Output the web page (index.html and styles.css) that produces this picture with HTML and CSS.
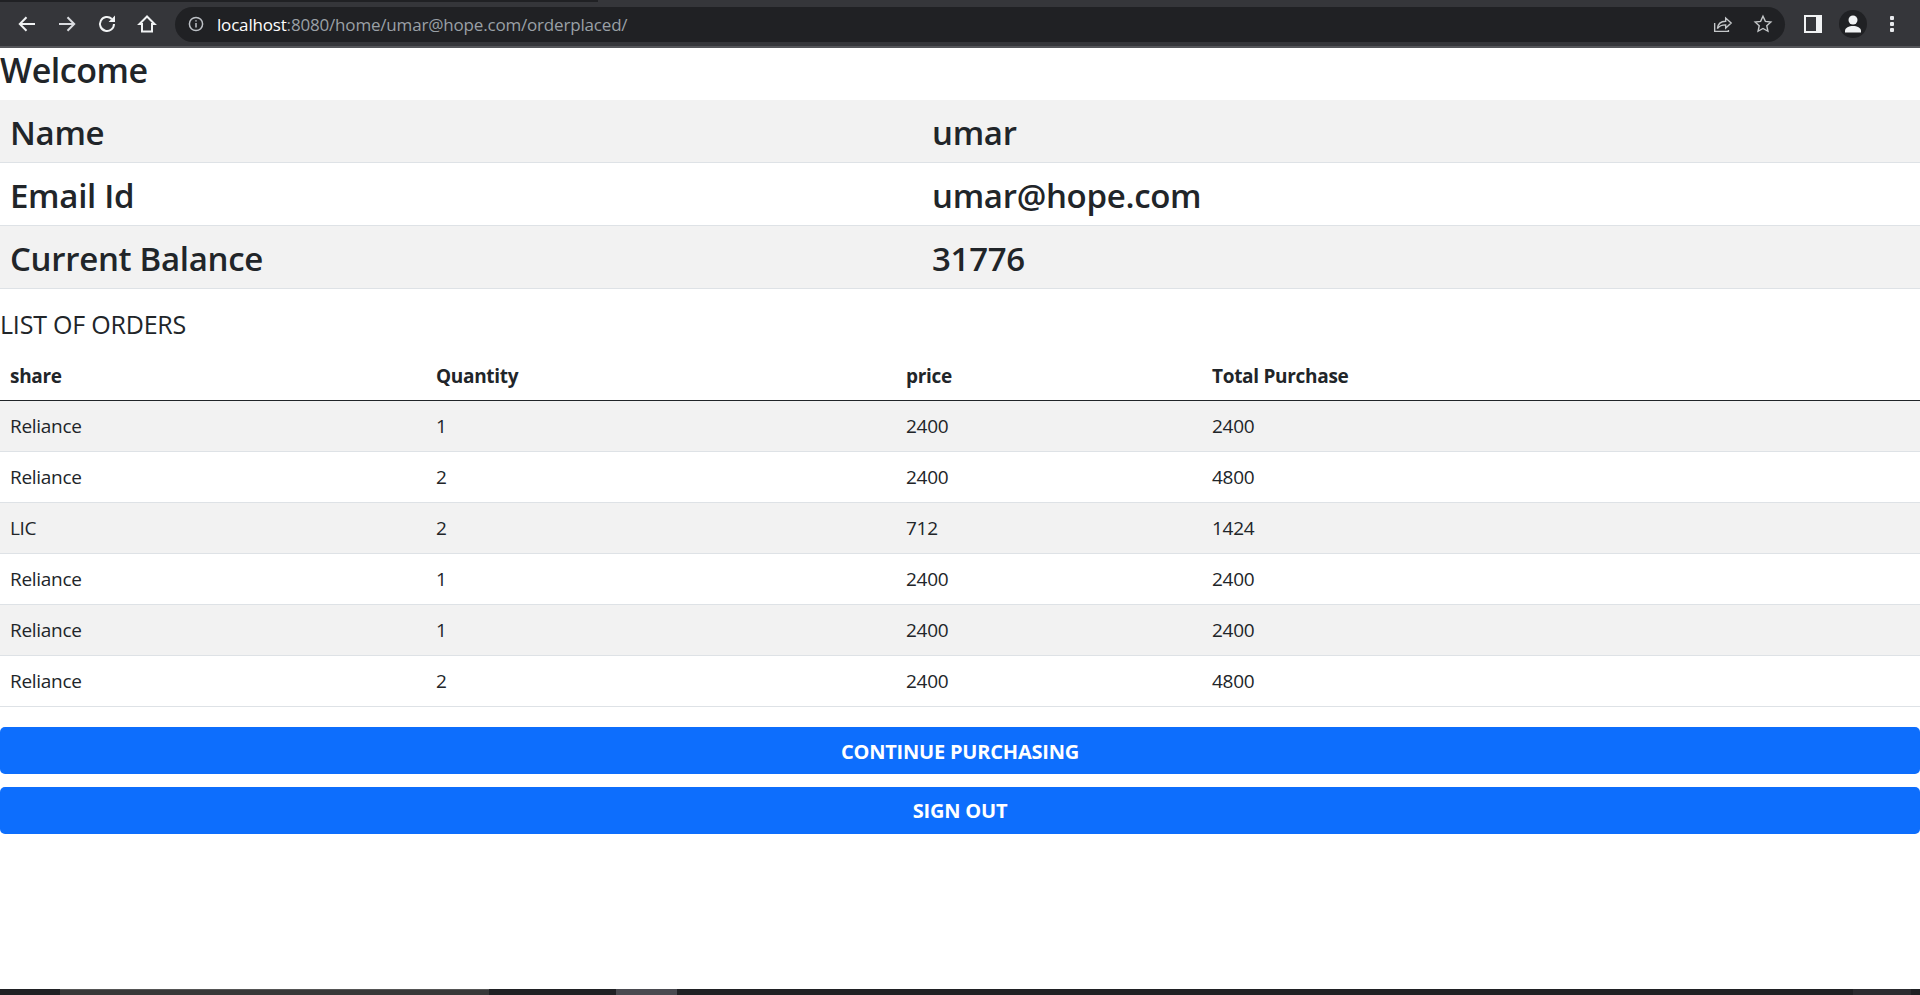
FILE: index.html
```html
<!DOCTYPE html>
<html>
	<head>
		<meta charset="UTF-8">
		<title>orderplaced</title>
		<link rel="stylesheet" href="styles.css">
	</head>
	<body>
		<div class="topstrip"><div class="topstrip-tab"></div></div>
		<div class="toolbar">
			<div class="nav">
				<svg class="icon" viewBox="0 0 24 24"><path d="M20 12H5M11.500 5.200 4.800 12l6.700 6.800"/></svg>
				<svg class="icon icon-dim" viewBox="0 0 24 24"><path d="M4 12h15M12.500 5.200l6.700 6.800-6.700 6.800"/></svg>
				<svg class="icon" viewBox="0 0 24 24"><path d="M19 12a7 7 0 1 1-2.200-5.100"/><path class="solid" d="M20 3.500v6.400h-6.400z"/></svg>
				<svg class="icon" viewBox="0 0 24 24"><path d="M12 4.500 4.500 12H7v7.500h10V12h2.500z"/></svg>
			</div>
			<div class="omnibox">
				<svg class="icon-info" viewBox="0 0 16 16"><circle cx="8" cy="8" r="6.600"/><path d="M8 7v4.600M8 4.200v1.400"/></svg>
				<span class="url"><span class="url-host">localhost</span>:8080/home/umar@hope.com/orderplaced/</span>
				<svg class="icon icon-share" viewBox="0 0 24 24"><path d="M4 11v9h15v-1.500"/><path d="M7 17c.5-5 4-8 9-8V5.500l6 5.500-6 5.500V13c-4 0-7 1-9 4z"/></svg>
				<svg class="icon icon-star" viewBox="0 0 24 24"><path d="M12 3.500l2.600 5.600 6 .7-4.500 4.100 1.300 6L12 16.900l-5.400 3 1.300-6-4.500-4.100 6-.7z"/></svg>
			</div>
			<div class="side-btn"><div class="side-pane"></div></div>
			<div class="avatar">
				<svg viewBox="0 0 28 28"><circle cx="14" cy="10" r="4.500"/><path d="M6 21c0-3.500 4-5 8-5s8 1.500 8 5v1.500H6z"/></svg>
			</div>
			<div class="dots"><i></i><i></i><i></i></div>
		</div>

		<div class="page">
			<h3 class="welcome">Welcome</h3>
			<table class="info">
				<colgroup><col class="info-label"><col></colgroup>
				<tr><td>Name</td><td>umar</td></tr>
				<tr><td>Email Id</td><td>umar@hope.com</td></tr>
				<tr><td>Current Balance</td><td>31776</td></tr>
			</table>

			<h5 class="list-title">LIST OF ORDERS</h5>
			<table class="orders">
				<colgroup><col class="c-share"><col class="c-qty"><col class="c-price"><col></colgroup>
				<thead>
					<tr><th>share</th><th>Quantity</th><th>price</th><th>Total Purchase</th></tr>
				</thead>
				<tbody>
					<tr><td>Reliance</td><td>1</td><td>2400</td><td>2400</td></tr>
					<tr><td>Reliance</td><td>2</td><td>2400</td><td>4800</td></tr>
					<tr><td>LIC</td><td>2</td><td>712</td><td>1424</td></tr>
					<tr><td>Reliance</td><td>1</td><td>2400</td><td>2400</td></tr>
					<tr><td>Reliance</td><td>1</td><td>2400</td><td>2400</td></tr>
					<tr><td>Reliance</td><td>2</td><td>2400</td><td>4800</td></tr>
				</tbody>
			</table>

			<a href="#" class="btn btn-first">CONTINUE PURCHASING</a>
			<a href="#" class="btn">SIGN OUT</a>
		</div>

		<div class="bottomstrip">
			<div class="strip-a"></div>
			<div class="strip-b"></div>
			<div class="strip-c"></div>
		</div>
	</body>
</html>
```

FILE: styles.css
```css
*{
	margin:0px;
	padding:0px;
	box-sizing:border-box;
}
html,body{
	height:100%;
	overflow:hidden;
}
body{
	display:flex;
	flex-direction:column;
	font-family:"Open Sans","Noto Sans",sans-serif;
	color:#212529;
	background:#fff;
}

/* browser bar */
.topstrip{
	height:2px;
	background:#35363a;
}
.topstrip-tab{
	width:598px;
	height:2px;
	background:#202124;
}
.toolbar{
	height:46px;
	background:#35363a;
	border-bottom:2px solid #55565a;
	display:flex;
	align-items:center;
	padding-left:12px;
}
.nav{
	display:flex;
	gap:10px;
	width:163px;
}
.icon{
	width:30px;
	height:30px;
	padding:3px;
	fill:none;
	stroke:#f1f3f4;
	stroke-width:2;
}
.icon-dim{
	stroke:#dadce0;
}
.icon .solid{
	fill:#f1f3f4;
	stroke:none;
}
.omnibox{
	width:1610px;
	height:35px;
	background:#202124;
	border-radius:18px;
	display:flex;
	align-items:center;
	padding-left:13px;
}
.icon-info{
	width:16px;
	height:16px;
	fill:none;
	stroke:#bdc1c6;
	stroke-width:1.500;
	flex:none;
}
.url{
	margin-left:13px;
	flex:1;
	font-size:17px;
	letter-spacing:-0.18px;
	color:#9aa0a6;
	white-space:nowrap;
}
.url-host{
	color:#fff;
}
.icon-share,.icon-star{
	width:28px;
	height:28px;
	stroke:#c4c7c9;
	stroke-width:1.500;
}
.icon-share{
	margin-right:13px;
}
.icon-star{
	margin-right:8px;
}
.side-btn{
	margin-left:19px;
	width:18px;
	height:18px;
	background:#f1f3f4;
	padding:2px;
}
.side-pane{
	width:10px;
	height:14px;
	background:#35363a;
}
.avatar{
	margin-left:17px;
	width:28px;
	height:28px;
	border-radius:50%;
	background:#202124;
}
.avatar svg{
	display:block;
	fill:#f1f3f4;
}
.dots{
	margin-left:23px;
	display:flex;
	flex-direction:column;
	gap:2px;
}
.dots i{
	display:block;
	width:4px;
	height:4px;
	background:#e8eaed;
	border-radius:1px;
}

/* page */
.page{
	flex:1;
}
.welcome{
	font-size:34px;
	font-weight:600;
	line-height:42px;
	padding-top:1px;
	height:52px;
	letter-spacing:-0.45px;
}
table{
	width:100%;
	border-collapse:separate;
	border-spacing:0px;
	table-layout:fixed;
}
td,th{
	text-align:left;
	border-bottom:1px solid #dee2e6;
}
.info-label{
	width:922px;
}
.info td{
	font-size:33px;
	font-weight:600;
	height:63px;
	padding:2px 10px 0px;
	letter-spacing:-0.3px;
}
.info tr:nth-child(odd) td{
	background:#f2f2f2;
}
.list-title{
	font-size:25px;
	font-weight:500;
	line-height:30px;
	margin-top:20px;
	height:46px;
	letter-spacing:-0.2px;
}
.c-share{
	width:426px;
}
.c-qty{
	width:470px;
}
.c-price{
	width:306px;
}
.orders th,.orders td{
	font-size:19px;
	padding:0px 10px;
	letter-spacing:-0.3px;
}
.orders th{
	height:46px;
	font-weight:700;
	padding-bottom:4px;
	border-bottom:1px solid #212529;
}
.orders td{
	height:51px;
}
.orders tbody tr:nth-child(odd) td{
	background:#f2f2f2;
}
.btn{
	display:block;
	height:47px;
	line-height:47px;
	margin-top:13px;
	background:#0d6efd;
	color:#fff;
	font-size:20px;
	font-weight:700;
	text-align:center;
	text-decoration:none;
	border-radius:5px;
	letter-spacing:-0.2px;
}
.btn-first{
	margin-top:20px;
	padding-top:2px;
	line-height:45px;
}

.bottomstrip{
	height:6px;
	background:#202124;
	display:flex;
}
.strip-a{
	width:429px;
	margin-left:60px;
	background:#383838;
	border-top:1px solid #555;
}
.strip-b{
	width:61px;
	margin-left:127px;
	background:#4a4a50;
}
.strip-c{
	width:58px;
	margin-left:1176px;
	background:#2c2c30;
}
```
